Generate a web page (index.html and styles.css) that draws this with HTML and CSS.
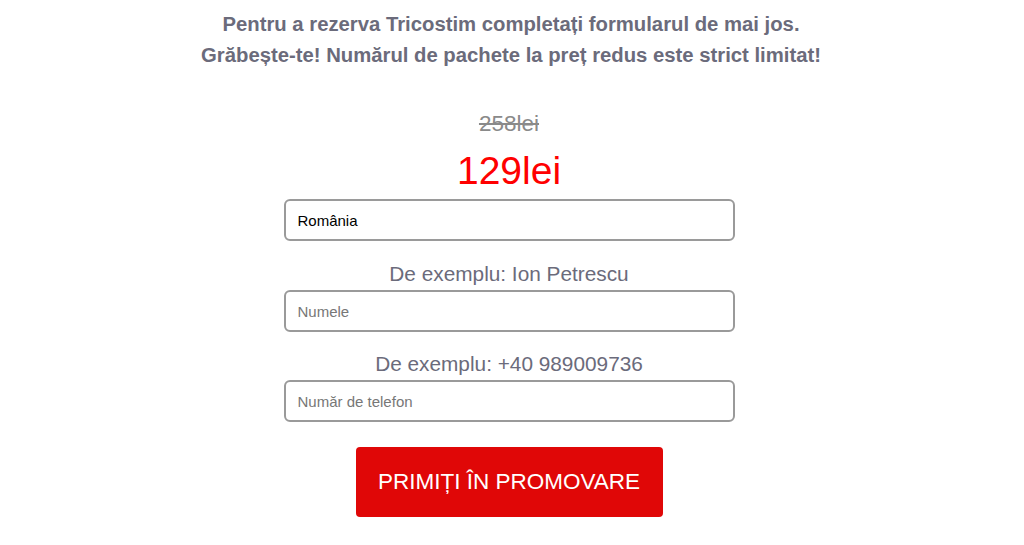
FILE: index.html
```html
<!DOCTYPE html>
<html lang="ro">
<head>
  <meta charset="UTF-8" />
  <meta name="viewport" content="width=device-width, initial-scale=1.0"/>
  <title>Tricostim</title>
  <link rel="stylesheet" href="styles.css">
</head>
<body>

  <h2 class="intro">Pentru a rezerva Tricostim completați formularul de mai jos.<br>Grăbește-te! Numărul de pachete la preț redus este strict limitat!</h2>

  <div class="form-wrap">
    <form class="order-form">
      <div class="price-old">258lei</div>
      <div class="price-new">129lei</div>

      <select class="field" name="country">
        <option>România</option>
      </select>

      <label class="hint" for="name">De exemplu: Ion Petrescu</label>
      <input class="field" id="name" type="text" name="name" placeholder="Numele">

      <label class="hint hint-phone" for="phone">De exemplu: +40 989009736</label>
      <input class="field" id="phone" type="tel" name="phone" placeholder="Număr de telefon">

      <button type="submit" class="submit">PRIMIȚI ÎN PROMOVARE</button>
    </form>
  </div>

</body>
</html>
```

FILE: styles.css
```css
body {
  margin: 0;
  font-family: "Liberation Sans", Arial, sans-serif;
  background-color: #fff;
  text-align: center;
}

.intro {
  margin: 9px 0 0;
  padding-right: 2px;
  font-size: 20.3px;
  line-height: 31px;
  font-weight: bold;
  color: #6b6b7b;
}

.form-wrap {
  padding-right: 6px;
}

.order-form {
  width: 451px;
  margin: 0 auto;
  display: flex;
  flex-direction: column;
  align-items: center;
}

.price-old {
  margin-top: 40px;
  font-size: 22.5px;
  line-height: 26px;
  color: #8a8a8a;
  text-decoration: line-through;
}

.price-new {
  margin-top: 14px;
  font-size: 39px;
  line-height: 40px;
  color: #ff0000;
}

.field {
  width: 100%;
  height: 42px;
  box-sizing: border-box;
  padding: 0 12px;
  border: 2px solid #9a9a9a;
  border-radius: 6px;
  background: #fff;
  font-family: inherit;
  font-size: 15px;
  color: #000;
  text-align: left;
  appearance: none;
  -webkit-appearance: none;
  outline: none;
}

select.field {
  margin-top: 8px;
}

.field::placeholder {
  color: #777;
}

.hint {
  margin-top: 20px;
  margin-bottom: 4px;
  font-size: 20.8px;
  line-height: 25px;
  color: #6b6b7b;
}

.hint-phone {
  margin-top: 19px;
}

.submit {
  margin-top: 25px;
  width: 307px;
  height: 70px;
  border: none;
  border-radius: 4px;
  background-color: #e00707;
  color: #fff;
  font-family: inherit;
  font-size: 22.5px;
  cursor: pointer;
}
```
